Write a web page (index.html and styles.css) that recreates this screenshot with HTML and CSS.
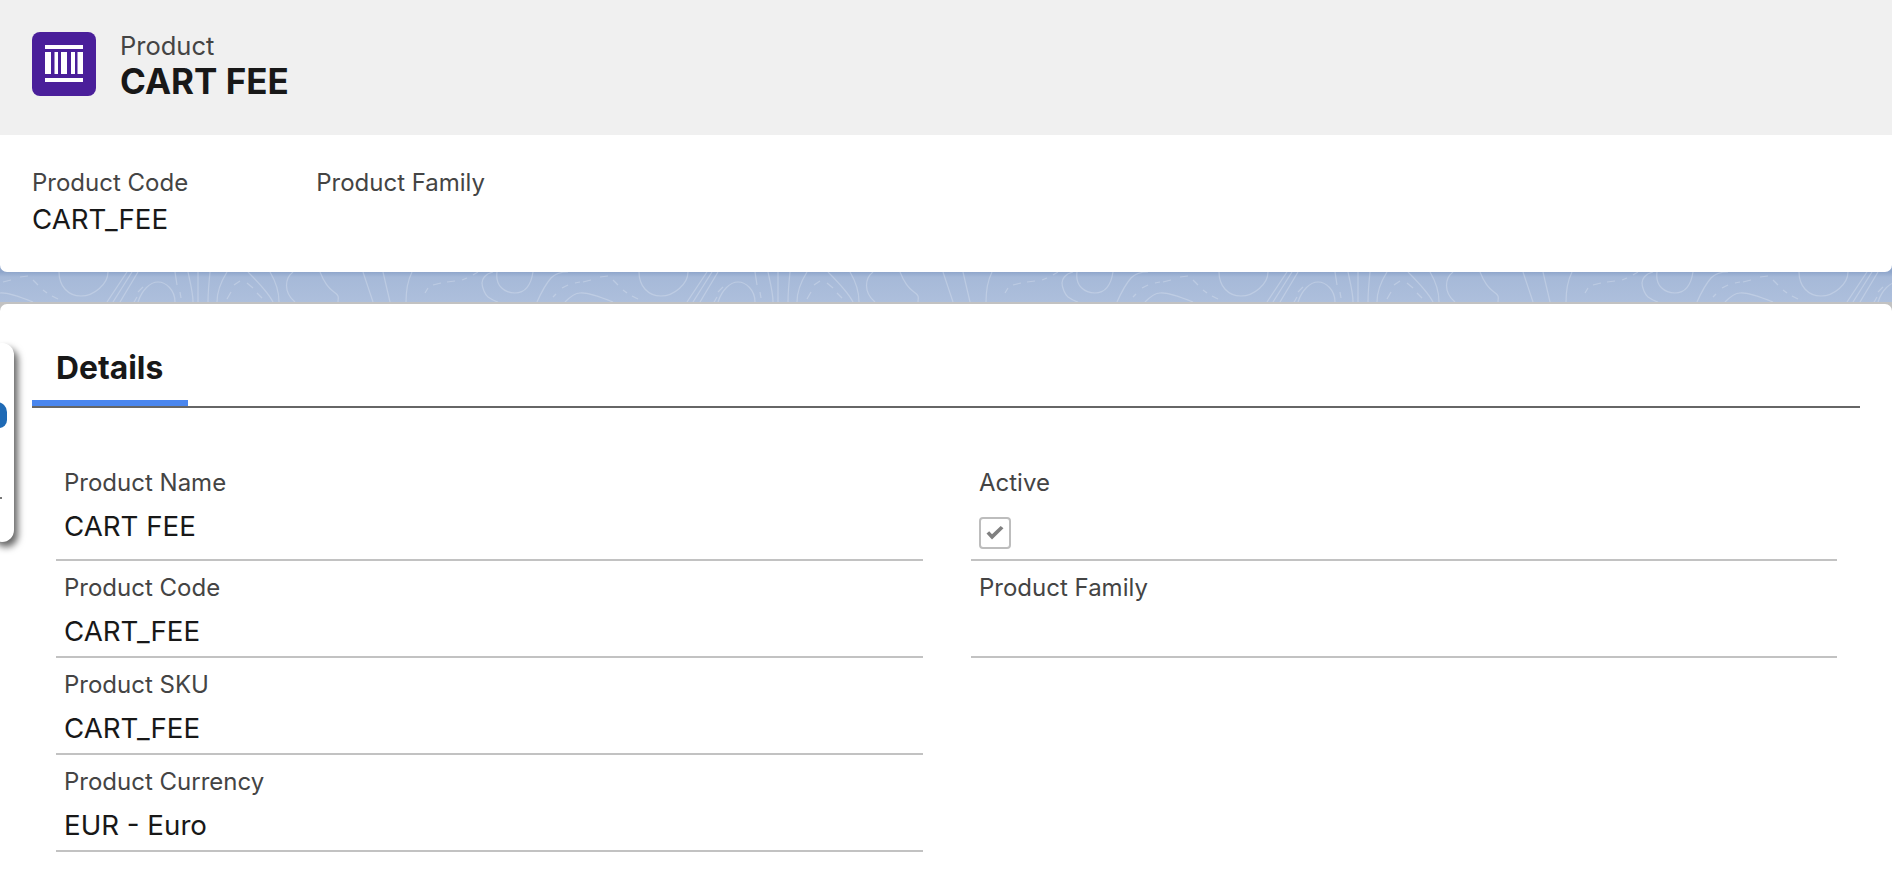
FILE: index.html
```html
<!DOCTYPE html>
<html>
<head>
	<title>CART FEE | Product</title>
	<link rel="stylesheet" href="styles.css">
</head>
<body>

<!-- record header -->
<div class="record-head">
	<div class="page-title">
		<div class="record-icon">
			<svg width="38" height="38" viewBox="0 0 38 38"><path fill="#fff" d="M0 0h38v4H0zM0 33h38v4H0zM0 7h6v22H0zM9.500 7h3.500v22H9.500zM16 7h6v22h-6zM26 7h4v22h-4zM32.500 7H38v22h-5.500z"/></svg>
		</div>
		<div class="title-text">
			<div class="object-name">Product</div>
			<div class="record-name">CART FEE</div>
		</div>
	</div>
	<div class="highlights">
		<div class="highlight">
			<div class="highlight-label">Product Code</div>
			<div class="highlight-value">CART_FEE</div>
		</div>
		<div class="highlight">
			<div class="highlight-label">Product Family</div>
		</div>
	</div>
</div>

<!-- strip of page background between the cards -->
<div class="band">
	<svg class="contours" width="1892" height="30">
		<defs>
			<pattern id="contour" width="580" height="30" patternUnits="userSpaceOnUse">
				<g fill="none" stroke="#fff" stroke-opacity="0.23" stroke-width="1.200">
					<path d="M59 0c0 14 9 24 22 24s27-12 27-24"/>
					<path d="M107 30l20-30M113 30l19-30M120 30l18-30M138 20l5-5M133 32l4-7"/>
					<path d="M138 30c4-12 12-20 20-20s17 8 17 20"/>
					<path d="M175 0l2 13M180 20l1 6"/>
					<path d="M188 0c2 10 5 20 5 30M198 0v30M210 0c-1 10-2 20-2 30"/>
					<path d="M217 30c0-12 5-22 10-30"/>
					<path d="M227 27l4-7M234 13l6-4M247 11l6 5M257 21l5 5"/>
					<path d="M248 0c10 10 20 20 25 30M270 0c6 10 9 20 9 30"/>
					<path d="M293 0c-8 6-10 20 2 30"/>
					<path d="M320 0c4 10 8 16 14 20s4 6 4 10"/>
					<path d="M363 0l10 30M383 0l7 30M412 0c-4 8-6 18-6 30"/>
					<path d="M425 21l3-5M433 13l8-2M447 10l8-1M462 8l5-2M473 3l5-3"/>
					<path d="M493 0c-8 2-11 7-11 11s3 12 6 14 6 4 10 5"/>
					<path d="M497 0c-2 14 8 21 18 21s16-8 18-21"/>
					<path d="M537 30c4-9 8-17 14-24 3-3 9-6 17-6"/>
					<path d="M553 25l3-3M562 16l6-3M575 11l5-1"/>
					<path d="M565 30c5-5 10-9 15-9M0 21c7-1 18 3 33 9"/>
					<path d="M3 10l8-2M20 5l8-1M33 8l5 5M43 18l4 3M52 24l6 3"/>
				</g>
			</pattern>
		</defs>
		<rect width="1892" height="30" fill="url(#contour)"></rect>
	</svg>
</div>

<!-- details card -->
<div class="details-card">
	<div class="side-panel">
		<span class="side-blob"></span>
		<span class="side-dot"></span>
	</div>
	<div class="tabs">
		<div class="tab">Details</div>
	</div>
	<div class="fields">
		<div class="field field-first">
			<div class="field-label">Product Name</div>
			<div class="field-value">CART FEE</div>
		</div>
		<div class="field field-first">
			<div class="field-label">Active</div>
			<div class="checkbox">
				<svg width="18" height="16" viewBox="0 0 18 16"><path fill="#808080" d="M0.500 8.500l2.700-2.300 2.800 3.100 8.700-8.300 2.800 2.300-11.500 11.200z"/></svg>
			</div>
		</div>
		<div class="field">
			<div class="field-label">Product Code</div>
			<div class="field-value">CART_FEE</div>
		</div>
		<div class="field">
			<div class="field-label">Product Family</div>
		</div>
		<div class="field">
			<div class="field-label">Product SKU</div>
			<div class="field-value">CART_FEE</div>
		</div>
		<div class="field-empty"></div>
		<div class="field">
			<div class="field-label">Product Currency</div>
			<div class="field-value">EUR - Euro</div>
		</div>
	</div>
</div>

</body>
</html>
```
FILE: styles.css
```css
html, body {
	height: 100%;
}
body {
	margin: 0;
	overflow: hidden;
	background-color: white;
	font-family: Inter, "Liberation Sans", sans-serif;
	color: #181818;
}

/* record header */
.record-head {
	height: 272px;
	background-color: white;
	border-radius: 0 0 7px 7px;
	overflow: hidden;
	position: relative;
	z-index: 1;
}
.page-title {
	height: 135px;
	box-sizing: border-box;
	padding: 32px 32px 0;
	display: flex;
	gap: 24px;
	background-color: #f0f0f0;
}
.record-icon {
	width: 64px;
	height: 64px;
	border-radius: 8px;
	background-color: #4a1f9a;
	display: flex;
	align-items: center;
	justify-content: center;
}
.title-text {
	margin-top: -1px;
}
.object-name {
	font-size: 25.500px;
	line-height: 30px;
	color: #444;
}
.record-name {
	font-size: 35px;
	font-weight: 700;
	line-height: 38px;
	margin-top: 1px;
	color: #181818;
}
.highlights {
	display: flex;
	gap: 128px;
	padding: 33px 32px 0;
}
.highlight-label {
	font-size: 24px;
	line-height: 30px;
	color: #444;
}
.highlight-value {
	font-size: 27.700px;
	line-height: 36px;
	margin-top: 3px;
}

/* band, runs under the round corners of both cards */
.band {
	height: 48px;
	box-sizing: border-box;
	margin: -8px 0;
	padding-top: 8px;
	overflow: hidden;
	background: linear-gradient(#8fa6cb 8px, #a6b9d8 13px, #adbfdc 38px, #c2c2c2 38px);
}
.contours {
	display: block;
}

/* details card */
.details-card {
	position: relative;
	z-index: 1;
	height: 588px;
	box-sizing: border-box;
	padding: 41px 32px 0;
	background-color: white;
	border-radius: 7px 7px 0 0;
}
.side-panel {
	position: absolute;
	left: -10px;
	top: 39px;
	width: 24px;
	height: 199px;
	background-color: white;
	border-radius: 12px;
	box-shadow: 4px 5px 7px rgba(0, 0, 0, 0.6);
}
.side-blob {
	position: absolute;
	left: 4px;
	top: 59px;
	width: 13px;
	height: 26px;
	border-radius: 0 10px 8px 0;
	background-color: #1f6ab5;
}
.side-dot {
	position: absolute;
	left: 10px;
	top: 154px;
	width: 2px;
	height: 2px;
	background-color: #777;
}
.tabs {
	border-bottom: 2px solid #666;
	height: 61px;
}
.tab {
	width: 156px;
	height: 61px;
	box-sizing: border-box;
	padding: 4px 0 0 24px;
	border-bottom: 6px solid #4a86ee;
	font-size: 31.800px;
	font-weight: 700;
	line-height: 38px;
}
.fields {
	display: grid;
	grid-template-columns: 867px 866px;
	column-gap: 48px;
	margin: 0 24px;
	padding-top: 47px;
}
.field {
	height: 97px;
	box-sizing: border-box;
	padding: 12px 8px 0;
	border-bottom: 2px solid #c2c2c2;
}
.field-first {
	height: 106px;
	padding-top: 13px;
}
.field-label {
	font-size: 24px;
	line-height: 30px;
	color: #444;
}
.field-value {
	font-size: 27.700px;
	line-height: 36px;
	margin-top: 10px;
	color: #181818;
}
.checkbox {
	width: 32px;
	height: 32px;
	box-sizing: border-box;
	margin-top: 19px;
	border: 2px solid #bdbdbd;
	border-radius: 4px;
	display: flex;
	align-items: center;
	justify-content: center;
}
```
